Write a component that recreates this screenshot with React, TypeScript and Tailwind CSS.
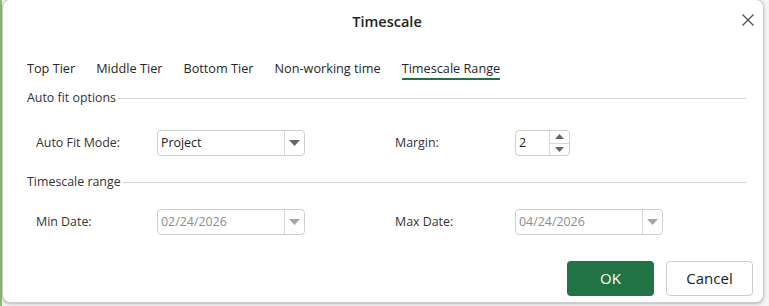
import React from "react";

const font = { fontFamily: '"Segoe UI", "Open Sans", "Noto Sans", sans-serif' };

function Caret({ disabled }: { disabled?: boolean }) {
  return (
    <svg width="11" height="6" viewBox="0 0 11 6">
      <path d="M0 0 L11 0 L5.5 6 Z" fill={disabled ? "#a6a6a6" : "#666666"} />
    </svg>
  );
}

function Select({ value, disabled }: { value: string; disabled?: boolean }) {
  return (
    <div className="flex h-[26px] w-[148px] items-stretch rounded-[4px] border border-[#cfcfcf] bg-white">
      <div
        className={`flex flex-1 items-center pl-[3px] text-[12.4px] ${disabled ? "text-[#8c8c8c]" : "text-[#222]"}`}
      >
        {value}
      </div>
      <div className="flex w-[20px] items-center justify-center border-l border-[#d6d6d6]">
        <Caret disabled={disabled} />
      </div>
    </div>
  );
}

function Spinner() {
  return (
    <div className="flex h-[26px] w-[55px] items-stretch rounded-[4px] border border-[#cfcfcf] bg-white">
      <div className="flex flex-1 items-center pl-[3px] text-[12.4px] text-[#222]">2</div>
      <div className="flex w-[20px] flex-col border-l border-[#d6d6d6]">
        <div className="flex flex-1 items-center justify-center border-b border-[#d6d6d6]">
          <svg width="9" height="5" viewBox="0 0 9 5">
            <path d="M0 5 L9 5 L4.5 0 Z" fill="#666" />
          </svg>
        </div>
        <div className="flex flex-1 items-center justify-center">
          <svg width="9" height="5" viewBox="0 0 9 5">
            <path d="M0 0 L9 0 L4.5 5 Z" fill="#666" />
          </svg>
        </div>
      </div>
    </div>
  );
}

function Section({ title }: { title: string }) {
  return (
    <div className="flex h-[20px] items-center pr-[17px]">
      <span className="text-[12.4px] text-[#333]">{title}</span>
      <div className="ml-[2px] h-px flex-1 bg-[#d4d4d4]" />
    </div>
  );
}

export default function App() {
  const tabs = ["Top Tier", "Middle Tier", "Bottom Tier", "Non-working time", "Timescale Range"];
  return (
    <div className="flex h-[306px] w-[769px] overflow-hidden bg-[#f4f4f4]" style={font}>
      <div className="w-[2px] bg-[#8dbf6b]" />
      <div className="relative flex h-[304px] w-[762px] flex-col rounded-[8px] border border-[#c9c9c9] bg-white shadow-[0_1px_3px_rgba(0,0,0,0.25)] -mt-[1px]">
        {/* header */}
        <div className="flex h-[42px] items-center justify-center pl-[8px] pt-[1px]">
          <span className="text-[14.5px] font-semibold text-[#242424]">Timescale</span>
        </div>
        <div className="absolute right-[9px] top-[13px] flex h-[13px] w-[13px] items-center justify-center">
          <svg width="12" height="12" viewBox="0 0 12 12">
            <path d="M0.5 0.5 L11.5 11.5 M11.5 0.5 L0.5 11.5" stroke="#555" strokeWidth="1.4" />
          </svg>
        </div>
        {/* tabs */}
        <div className="mt-[17px] flex h-[26px] gap-[21px] pl-[24px]">
          {tabs.map((t, i) => (
            <div key={t} className="relative flex h-full items-start">
              <span className="text-[12.7px] leading-[18px] text-[#262626]">{t}</span>
              {i === tabs.length - 1 && (
                <div className="absolute bottom-[5px] left-0 right-0 h-[2px] bg-[#217346]" />
              )}
            </div>
          ))}
        </div>
        {/* auto fit */}
        <div className="mt-[3px] pl-[24px]">
          <Section title="Auto fit options" />
        </div>
        <div className="mt-[22px] flex h-[26px] items-center pl-[33px]">
          <span className="w-[121px] text-[12.4px] text-[#333]">Auto Fit Mode:</span>
          <Select value="Project" />
          <span className="ml-[90px] w-[120px] text-[12.4px] text-[#333]">Margin:</span>
          <Spinner />
        </div>
        <div className="mt-[16px] pl-[24px]">
          <Section title="Timescale range" />
        </div>
        <div className="mt-[17px] flex h-[26px] items-center pl-[33px]">
          <span className="w-[121px] text-[12.4px] text-[#333]">Min Date:</span>
          <Select value="02/24/2026" disabled />
          <span className="ml-[90px] w-[120px] text-[12.4px] text-[#333]">Max Date:</span>
          <Select value="04/24/2026" disabled />
        </div>
        {/* buttons */}
        <div className="mt-[26px] flex justify-end gap-[12px] pr-[10px]">
          <button className="h-[35px] w-[87px] rounded-[4px] bg-[#217346] text-[15px] text-white">
            OK
          </button>
          <button className="h-[35px] w-[87px] rounded-[4px] border border-[#cccccc] bg-white text-[15px] text-[#222]">
            Cancel
          </button>
        </div>
      </div>
    </div>
  );
}
